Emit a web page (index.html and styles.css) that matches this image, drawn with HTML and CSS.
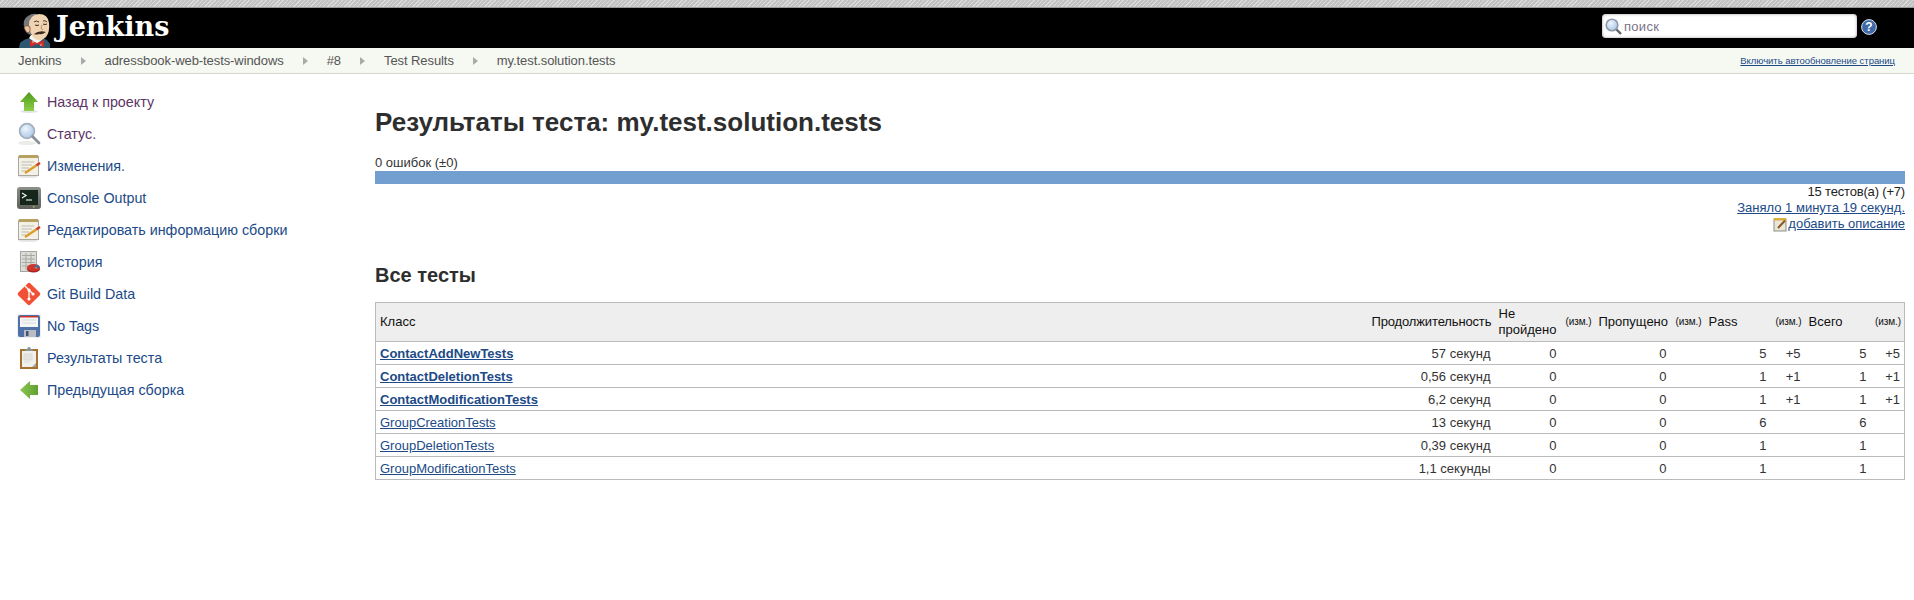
FILE: index.html
```html
<!DOCTYPE html>
<html lang="ru">
<head>
    <meta charset="UTF-8">
    <title>Test Results</title>
    <link rel="stylesheet" href="styles.css">
</head>
<body>

    <div class="top-strip"></div>

    <!-- header -->
    <div class="header">
        <a class="logo" href="#">
            <svg class="butler" width="33" height="35" viewBox="0 0 33 35">
                <path d="M1 35 L2 30 Q6 26 12 25 L25 25 Q30 27 32 31 L32 35 Z" fill="#2f5870"/>
                <path d="M11 25 L19 31 L26 25 L24 22 L13 22 Z" fill="#f4f4f0"/>
                <path d="M7 16 Q3 7 10 3 Q14 0 19 1 L14 8 L13 22 Q8 21 7 16 Z" fill="#77787a"/>
                <path d="M11 12 Q11 2 21 1 Q30 1 31 10 Q32 19 28 24 Q23 29 17 26 Q12 22 11 12 Z" fill="#f0d3b0"/>
                <path d="M6 14 Q9 11 12 14 Q13 19 10 20 Q7 19 6 14 Z" fill="#eec29c" stroke="#5b4636" stroke-width=".7"/>
                <path d="M16 9 Q18 7 21 9 M25 8 Q27 7 29 9" stroke="#3b2b20" stroke-width=".9" fill="none"/>
                <path d="M17 12 Q19 13 21 12 M25 11 Q27 12 29 11" stroke="#3b2b20" stroke-width="1" fill="none"/>
                <path d="M24 12 Q22 16 25 17" stroke="#a87a5c" stroke-width=".8" fill="none"/>
                <path d="M16 21 Q21 17 28 19 Q24 22 21 21 Q18 22 16 21 Z" fill="#3a2a20"/>
                <path d="M12 27 L19 30 L26 27 L26 34 L19 31 L12 34 Z" fill="#cc2e2a"/>
                <circle cx="15" cy="29" r=".7" fill="#fff"/>
                <circle cx="23" cy="32" r=".7" fill="#fff"/>
            </svg>
            <span class="logo-text">Jenkins</span>
        </a>
        <div class="search-box">
            <div class="search-input">
                <svg width="17" height="17" viewBox="0 0 17 17">
                    <circle cx="7" cy="7" r="5.8" fill="url(#glass)" stroke="#8c99a6" stroke-width="1.6"/>
                    <path d="M11.5 11.5 L16 16" stroke="#5d656d" stroke-width="2.4"/>
                </svg>
                <span>поиск</span>
            </div>
            <svg class="help" width="16" height="16" viewBox="0 0 16 16">
                <circle cx="8" cy="8" r="7.4" fill="#3f6aa8" stroke="#d5dfee"/>
                <text x="8" y="12" text-anchor="middle" class="help-mark">?</text>
            </svg>
        </div>
    </div>

    <!-- breadcrumbs -->
    <div class="breadcrumbs">
        <a href="#">Jenkins</a><i class="crumb-arrow"></i>
        <a href="#">adressbook-web-tests-windows</a><i class="crumb-arrow"></i>
        <a href="#">#8</a><i class="crumb-arrow"></i>
        <a href="#">Test Results</a><i class="crumb-arrow"></i>
        <a href="#">my.test.solution.tests</a>
        <a class="auto-refresh" href="#">Включить автообновление страниц</a>
    </div>

    <div class="page">
        <div class="side-panel">
            <div class="task">
                <svg width="24" height="24" viewBox="0 0 24 24">
                    <ellipse cx="12" cy="21.5" rx="9" ry="1.5" fill="#e3e3e0"/>
                    <path d="M12 2 L21 12 L17 12 L17 21 L7 21 L7 12 L3 12 Z" fill="url(#green)"/>
                </svg>
                <a class="visited" href="#">Назад к проекту</a>
            </div>
            <div class="task">
                <svg width="24" height="24" viewBox="0 0 24 24">
                    <ellipse cx="10" cy="21" rx="9" ry="2" fill="#ebebe8"/>
                    <circle cx="10" cy="9" r="7.4" fill="url(#glass)" stroke="#a3b0bd" stroke-width="1.8"/>
                    <path d="M15.5 14.5 L22 21" stroke="#8a9097" stroke-width="2.8" stroke-linecap="round"/>
                </svg>
                <a class="visited" href="#">Статус.</a>
            </div>
            <div class="task">
                <svg width="24" height="24" viewBox="0 0 24 24">
                    <use href="#note"/>
                </svg>
                <a href="#">Изменения.</a>
            </div>
            <div class="task">
                <svg width="24" height="24" viewBox="0 0 24 24">
                    <rect x="0" y="1" width="24" height="22" rx="3" fill="url(#metal)"/>
                    <rect x="3" y="4" width="18" height="15" fill="#16261b"/>
                    <path d="M5 7 L9 9.5 L5 12" stroke="#eef4ea" stroke-width="1.3" fill="none"/>
                    <path d="M9 14 L15 14" stroke="#d6e4d2" stroke-width="1.2"/>
                    <rect x="16" y="20" width="1.5" height="1.5" fill="#9ec26a"/>
                </svg>
                <a href="#">Console Output</a>
            </div>
            <div class="task">
                <svg width="24" height="24" viewBox="0 0 24 24">
                    <use href="#note"/>
                </svg>
                <a href="#">Редактировать информацию сборки</a>
            </div>
            <div class="task">
                <svg width="24" height="24" viewBox="0 0 24 24">
                    <rect x="3.5" y="1.5" width="16" height="20" fill="#dcdcd8" stroke="#a5a5a0"/>
                    <path d="M5 5.5 H18 M5 9 H18 M5 12.5 H18 M5 16 H13 M9 3 V20 M14 3 V14" stroke="#a8a8a2"/>
                    <ellipse cx="16.5" cy="19" rx="6.5" ry="3.6" fill="#a82622"/>
                    <ellipse cx="16.5" cy="17.5" rx="6.5" ry="3.6" fill="#d0352e"/>
                    <path d="M16.5 17.5 L20 14.5 Q23 16 23 18 Z" fill="#3f6fa8"/>
                    <path d="M17.5 17.5 L19.5 17 L20 19 Z" fill="#c8a83a"/>
                </svg>
                <a href="#">История</a>
            </div>
            <div class="task">
                <svg width="24" height="24" viewBox="0 0 24 24">
                    <rect x="3.5" y="3.5" width="17" height="17" rx="2" transform="rotate(45 12 12)" fill="#f05033"/>
                    <path d="M8 4 L12 8 L16 12 M12 8 V17" stroke="#fff" stroke-width="1.3" fill="none"/>
                    <circle cx="12" cy="8" r="1.6" fill="#fff"/>
                    <circle cx="16" cy="12" r="1.6" fill="#fff"/>
                    <circle cx="12" cy="17" r="1.6" fill="#fff"/>
                </svg>
                <a href="#">Git Build Data</a>
            </div>
            <div class="task">
                <svg width="24" height="24" viewBox="0 0 24 24">
                    <rect width="24" height="24" fill="#eef0f2"/>
                    <rect x="1" y="1" width="22" height="22" rx="2" fill="#4f71a8"/>
                    <rect x="3" y="2" width="18" height="11" fill="#f6f6f4"/>
                    <rect x="3" y="2" width="18" height="1.5" fill="#c9352f"/>
                    <path d="M5 6 H19 M5 9 H19" stroke="#d5d8dc"/>
                    <rect x="7" y="16" width="12" height="7" fill="#b9bdc2"/>
                    <rect x="9" y="17" width="2.5" height="5" fill="#44556f"/>
                </svg>
                <a href="#">No Tags</a>
            </div>
            <div class="task">
                <svg width="24" height="24" viewBox="0 0 24 24">
                    <rect x="3" y="3" width="18" height="20" fill="#a8702e"/>
                    <rect x="5" y="5" width="14" height="16" fill="#efefec"/>
                    <path d="M7 8 H15 V14 H7 Z M7 16 H13" fill="#e2e2de" stroke="#dcdcd8"/>
                    <path d="M19 17 L15 21 H19 Z" fill="#a5a5a0"/>
                    <path d="M8 5 L8.5 3 L10 3 Q10.5 1 12 1 Q13.5 1 14 3 L15.5 3 L16 5 Z" fill="#8f9391"/>
                </svg>
                <a href="#">Результаты теста</a>
            </div>
            <div class="task">
                <svg width="24" height="24" viewBox="0 0 24 24">
                    <path d="M3 12 L13 3 L13 7 L21 7 L21 17 L13 17 L13 21 Z" fill="url(#green-side)"/>
                </svg>
                <a href="#">Предыдущая сборка</a>
            </div>
        </div>

        <div class="main-panel">
            <h1>Результаты теста: my.test.solution.tests</h1>

            <div class="summary">0 ошибок (±0)</div>
            <div class="result-bar"></div>
            <div class="result-info">
                <div class="total">15 тестов(а) (+7)</div>
                <div><a href="#">Заняло 1 минута 19 секунд.</a></div>
                <div class="add-desc">
                    <svg width="15" height="15" viewBox="0 0 15 15">
                        <rect x="1" y="2" width="12" height="12" fill="#e9e6d6" stroke="#8d8d86"/>
                        <rect x="1" y="1" width="12" height="2.5" fill="#dcae3c"/>
                        <path d="M5 11 L12 3.5" stroke="#8a5a22" stroke-width="2"/>
                    </svg><a href="#">добавить описание</a>
                </div>
            </div>

            <h2>Все тесты</h2>

            <table class="result-table">
                <colgroup>
                    <col>
                    <col class="col-duration">
                    <col class="col-count">
                    <col class="col-diff">
                    <col class="col-skip">
                    <col class="col-diff">
                    <col class="col-count">
                    <col class="col-diff">
                    <col class="col-count">
                    <col class="col-diff">
                </colgroup>
                <thead>
                    <tr>
                        <th>Класс</th>
                        <th class="duration-head">Продолжительность</th>
                        <th>Не пройдено</th>
                        <th class="diff-head">(изм.)</th>
                        <th>Пропущено</th>
                        <th class="diff-head">(изм.)</th>
                        <th>Pass</th>
                        <th class="diff-head">(изм.)</th>
                        <th>Всего</th>
                        <th class="diff-head">(изм.)</th>
                    </tr>
                </thead>
                <tbody>
                    <tr>
                        <td><a class="strong" href="#">ContactAddNewTests</a></td>
                        <td class="right">57 секунд</td>
                        <td class="right">0</td><td></td>
                        <td class="right">0</td><td></td>
                        <td class="right">5</td><td class="right">+5</td>
                        <td class="right">5</td><td class="right">+5</td>
                    </tr>
                    <tr>
                        <td><a class="strong" href="#">ContactDeletionTests</a></td>
                        <td class="right">0,56 секунд</td>
                        <td class="right">0</td><td></td>
                        <td class="right">0</td><td></td>
                        <td class="right">1</td><td class="right">+1</td>
                        <td class="right">1</td><td class="right">+1</td>
                    </tr>
                    <tr>
                        <td><a class="strong" href="#">ContactModificationTests</a></td>
                        <td class="right">6,2 секунд</td>
                        <td class="right">0</td><td></td>
                        <td class="right">0</td><td></td>
                        <td class="right">1</td><td class="right">+1</td>
                        <td class="right">1</td><td class="right">+1</td>
                    </tr>
                    <tr>
                        <td><a href="#">GroupCreationTests</a></td>
                        <td class="right">13 секунд</td>
                        <td class="right">0</td><td></td>
                        <td class="right">0</td><td></td>
                        <td class="right">6</td><td></td>
                        <td class="right">6</td><td></td>
                    </tr>
                    <tr>
                        <td><a href="#">GroupDeletionTests</a></td>
                        <td class="right">0,39 секунд</td>
                        <td class="right">0</td><td></td>
                        <td class="right">0</td><td></td>
                        <td class="right">1</td><td></td>
                        <td class="right">1</td><td></td>
                    </tr>
                    <tr>
                        <td><a href="#">GroupModificationTests</a></td>
                        <td class="right">1,1 секунды</td>
                        <td class="right">0</td><td></td>
                        <td class="right">0</td><td></td>
                        <td class="right">1</td><td></td>
                        <td class="right">1</td><td></td>
                    </tr>
                </tbody>
            </table>
        </div>
    </div>

    <!-- shared icon parts -->
    <svg class="defs" width="0" height="0">
        <defs>
            <linearGradient id="green" x1="0" y1="0" x2="0" y2="1">
                <stop offset="0" stop-color="#4f9a1c"/>
                <stop offset="1" stop-color="#8ccf4a"/>
            </linearGradient>
            <linearGradient id="green-side" x1="0" y1="0" x2="1" y2="0">
                <stop offset="0" stop-color="#8cc455"/>
                <stop offset="1" stop-color="#5fa32e"/>
            </linearGradient>
            <radialGradient id="glass" cx=".4" cy=".35" r=".7">
                <stop offset="0" stop-color="#eef5fc"/>
                <stop offset="1" stop-color="#a9c6e6"/>
            </radialGradient>
            <linearGradient id="metal" x1="0" y1="0" x2="0" y2="1">
                <stop offset="0" stop-color="#8c8f8a"/>
                <stop offset="1" stop-color="#5c5f5a"/>
            </linearGradient>
            <g id="note">
                <ellipse cx="11" cy="22.5" rx="10" ry="1.3" fill="#e3e3e0"/>
                <rect x="1.5" y="2.5" width="20" height="19" fill="#f3f1e6" stroke="#a8a8a0"/>
                <rect x="2" y="1" width="19" height="3" fill="#b8a060"/>
                <path d="M4.5 8 H17 M4.5 11 H15 M4.5 14 H12 M4.5 17 H9" stroke="#bdbdb5"/>
                <path d="M8 19 L20 11" stroke="#dd9c2a" stroke-width="2.4"/>
                <path d="M19.5 11.3 L23 9" stroke="#d3352f" stroke-width="2.4"/>
            </g>
        </defs>
    </svg>

</body>
</html>
```

FILE: styles.css
```css
html, body {
    margin: 0;
    padding: 0;
}
body {
    font-family: "Liberation Sans", Arial, sans-serif;
    font-size: 13px;
    color: #333;
    background: #fff;
}
a {
    color: #204a87;
}

.top-strip {
    height: 7px;
    border-bottom: 1px solid #999;
    background: repeating-linear-gradient(135deg, #c2c2c2 0, #c2c2c2 2px, #dadada 2px, #dadada 3px);
}

.header {
    height: 40px;
    background: #000;
    display: flex;
    justify-content: space-between;
    overflow: hidden;
}
.logo {
    display: flex;
    align-items: flex-start;
    padding-left: 18px;
    text-decoration: none;
}
.butler {
    margin-top: 5px;
}
.logo-text {
    font-family: "DejaVu Serif", "Liberation Serif", serif;
    font-weight: bold;
    font-size: 27px;
    line-height: 38px;
    color: #fff;
    margin-left: 5px;
}
.search-box {
    display: flex;
    align-items: center;
    padding: 0 37px 4px 0;
    gap: 4px;
}
.search-input {
    width: 255px;
    height: 24px;
    box-sizing: border-box;
    background: #fff;
    border-radius: 4px;
    box-shadow: inset 0 0 3px #999;
    display: flex;
    align-items: center;
    padding-left: 3px;
    gap: 2px;
    color: #7a7288;
    font-size: 13px;
    letter-spacing: .3px;
}
.help {
    margin-top: 2px;
}
.help-mark {
    font-family: "Liberation Sans", sans-serif;
    font-size: 12px;
    font-weight: bold;
    fill: #fff;
}

.breadcrumbs {
    height: 25px;
    border-bottom: 1px solid #d3d7cf;
    background: #f6f8f2;
    display: flex;
    align-items: center;
    padding: 0 19px 0 18px;
    font-size: 13px;
    letter-spacing: -.08px;
}
.breadcrumbs a {
    color: #555;
    text-decoration: none;
}
.crumb-arrow {
    width: 0;
    height: 0;
    border-left: 5px solid #aaa;
    border-top: 4px solid transparent;
    border-bottom: 4px solid transparent;
    margin: 0 19px;
}
.breadcrumbs .auto-refresh {
    margin-left: auto;
    font-size: 9.5px;
    letter-spacing: -.04px;
    color: #204a87;
    text-decoration: underline;
}

.page {
    display: flex;
}
.side-panel {
    width: 375px;
    flex: none;
    padding-top: 12px;
    box-sizing: border-box;
}
.task {
    height: 32px;
    display: flex;
    align-items: center;
    padding-left: 17px;
    gap: 6px;
    font-size: 14.3px;
}
.task svg {
    flex: none;
}
.task a {
    text-decoration: none;
}
.task a.visited {
    color: #5c3566;
}

.main-panel {
    flex: 1;
    padding: 0 9px 0 0;
    min-width: 0;
}
h1 {
    font-size: 26px;
    line-height: 30px;
    margin: 33px 0 0;
    color: #2e2e2e;
}
.summary {
    margin-top: 18px;
    line-height: 16px;
}
.result-bar {
    height: 13px;
    background: #729fcf;
}
.result-info {
    text-align: right;
    line-height: 16px;
    color: #222;
}
.total {
    letter-spacing: -.18px;
}
.add-desc svg {
    vertical-align: -4px;
}
h2 {
    font-size: 20px;
    line-height: 24px;
    margin: 31px 0 0;
    color: #2e2e2e;
}

.result-table {
    width: 100%;
    table-layout: fixed;
    border-collapse: collapse;
    border: 1px solid #bbb;
    margin-top: 15px;
    font-size: 13px;
}
.col-duration { width: 127px; }
.col-count { width: 66px; }
.col-diff { width: 34px; }
.col-skip { width: 76px; }
.result-table th {
    background: #eee;
    color: #111;
    font-weight: normal;
    text-align: left;
    height: 38px;
    padding: 0 4px;
    line-height: 16px;
}
.result-table th.duration-head {
    text-align: right;
    padding-right: 7px;
    letter-spacing: -.14px;
}
.result-table th.diff-head {
    font-size: 10px;
    letter-spacing: -.1px;
    text-align: right;
    padding: 0 3px 0 0;
}
.result-table td {
    height: 22px;
    padding: 0 4px;
    border-top: 1px solid #bbb;
}
.right {
    text-align: right;
}
.strong {
    font-weight: bold;
}
.defs {
    display: block;
}
```
